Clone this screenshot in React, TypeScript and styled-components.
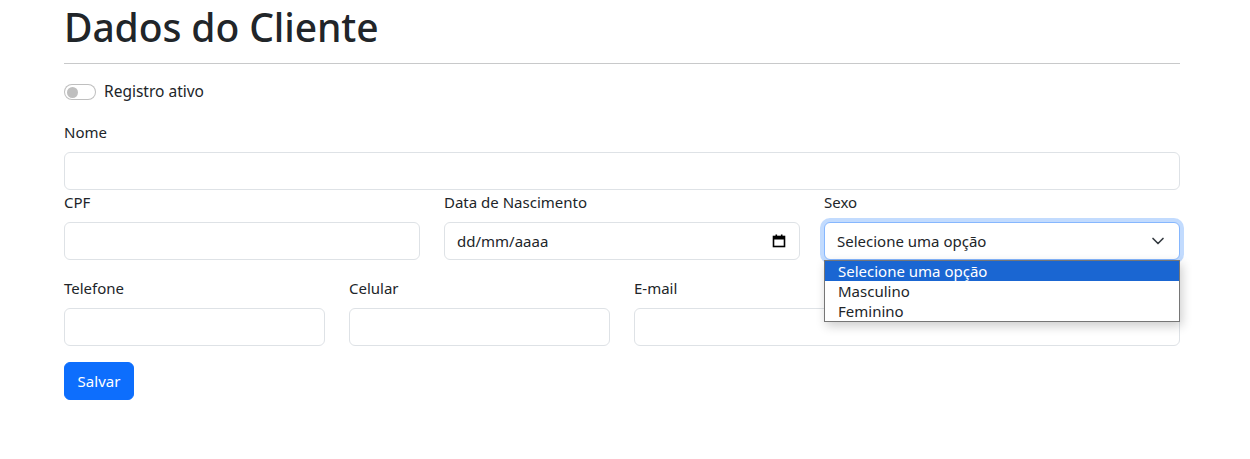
import React from "react";
import styled, { createGlobalStyle } from "styled-components";

const GlobalStyle = createGlobalStyle`
  * { box-sizing: border-box; }
  html, body { margin: 0; padding: 0; background: #fff; }
  body {
    font-family: "Noto Sans", "Open Sans", sans-serif;
    font-size: 16px;
    line-height: 1.5;
    color: #212529;
  }
`;

const Container = styled.div`
  width: 1116px;
  margin-left: 64px;
`;

const Title = styled.h1`
  margin: 0;
  font-size: 39px;
  font-weight: 500;
  line-height: 53px;
  height: 53px;
  letter-spacing: -0.1px;
`;

const Divider = styled.hr`
  margin: 10px 0 16px 0;
  border: 0;
  border-top: 1px solid #c8c9ca;
  height: 0;
`;

const SwitchRow = styled.div`
  display: flex;
  align-items: center;
  gap: 8px;
  height: 24px;
`;

const SwitchLabel = styled.span`
  font-size: 15.5px;
`;

const SwitchTrack = styled.span`
  width: 32px;
  height: 16px;
  border: 1px solid rgba(0, 0, 0, 0.25);
  border-radius: 8px;
  background: #fff;
  display: inline-flex;
  align-items: center;
  padding-left: 2px;
`;

const SwitchKnob = styled.span`
  width: 11px;
  height: 11px;
  border-radius: 50%;
  background: #bfbfbf;
`;

const Field = styled.div<{ $span: number }>`
  grid-column: span ${(p) => p.$span};
  display: flex;
  flex-direction: column;
`;

const Grid = styled.div<{ $top?: number }>`
  display: grid;
  grid-template-columns: repeat(12, 1fr);
  column-gap: 24px;
  margin-top: ${(p) => p.$top ?? 0}px;
`;

const Label = styled.label`
  display: block;
  height: 24px;
  line-height: 24px;
  margin-bottom: 8px;
  font-size: 15px;
`;

const Input = styled.input`
  display: block;
  width: 100%;
  height: 38px;
  padding: 6px 12px;
  font: inherit;
  color: #212529;
  background: #fff;
  border: 1px solid #dee2e6;
  border-radius: 6px;
  outline: none;
`;

const DateBox = styled.div`
  display: flex;
  align-items: center;
  justify-content: space-between;
  height: 38px;
  padding: 0 13px 0 12px;
  border: 1px solid #dee2e6;
  border-radius: 6px;
  background: #fff;
  font-size: 15px;
`;

const SelectWrap = styled.div`
  position: relative;
`;

const SelectBox = styled.div`
  display: flex;
  align-items: center;
  justify-content: space-between;
  height: 38px;
  padding: 0 14px 0 12px;
  border: 1px solid #86b7fe;
  border-radius: 6px;
  background: #fff;
  box-shadow: 0 0 0 4px rgba(13, 110, 253, 0.25);
  font-size: 15px;
`;

const Listbox = styled.ul`
  position: absolute;
  left: 0;
  right: 0;
  top: 38px;
  margin: 0;
  padding: 0;
  list-style: none;
  background: #fff;
  border: 1px solid #767676;
  box-shadow: 2px 4px 10px rgba(0, 0, 0, 0.2);
  z-index: 5;
`;

const Option = styled.li<{ $active?: boolean }>`
  height: 20px;
  line-height: 20px;
  padding-left: 13px;
  font-size: 15px;
  background: ${(p) => (p.$active ? "#1a66d2" : "transparent")};
  color: ${(p) => (p.$active ? "#fff" : "#212529")};
`;

const Button = styled.button`
  margin-top: 16px;
  height: 38px;
  padding: 0 12px;
  font: inherit;
  font-size: 15px;
  color: #fff;
  background: #0d6efd;
  border: 1px solid #0d6efd;
  border-radius: 6px;
  width: 70px;
`;

const Spacer = styled.div`
  height: 16px;
`;

const CalendarIcon = () => (
  <svg width="14" height="14" viewBox="0 0 14 14" fill="none">
    <rect x="1.5" y="2.5" width="11" height="10" stroke="#000" strokeWidth="1.6" />
    <rect x="1.5" y="2.5" width="11" height="3" fill="#000" />
    <rect x="3.5" y="0.5" width="1.6" height="2.5" fill="#000" />
    <rect x="8.9" y="0.5" width="1.6" height="2.5" fill="#000" />
  </svg>
);

const Chevron = () => (
  <svg width="14" height="10" viewBox="0 0 16 12" fill="none">
    <path d="m2 3 6 6 6-6" stroke="#343a40" strokeWidth="2" strokeLinecap="round" strokeLinejoin="round" />
  </svg>
);

export default function App() {
  return (
    <>
      <GlobalStyle />
      <Container>
        <Title>Dados do Cliente</Title>
        <Divider />
        <SwitchRow>
          <SwitchTrack>
            <SwitchKnob />
          </SwitchTrack>
          <SwitchLabel>Registro ativo</SwitchLabel>
        </SwitchRow>
        <Spacer />
        <Label>Nome</Label>
        <Input type="text" />
        <Grid>
          <Field $span={4}>
            <Label>CPF</Label>
            <Input type="text" />
          </Field>
          <Field $span={4}>
            <Label>Data de Nascimento</Label>
            <DateBox>
              <span>dd/mm/aaaa</span>
              <CalendarIcon />
            </DateBox>
          </Field>
          <Field $span={4}>
            <Label>Sexo</Label>
            <SelectWrap>
              <SelectBox>
                <span>Selecione uma opção</span>
                <Chevron />
              </SelectBox>
              <Listbox>
                <Option $active>Selecione uma opção</Option>
                <Option>Masculino</Option>
                <Option>Feminino</Option>
              </Listbox>
            </SelectWrap>
          </Field>
        </Grid>
        <Grid $top={16}>
          <Field $span={3}>
            <Label>Telefone</Label>
            <Input type="text" />
          </Field>
          <Field $span={3}>
            <Label>Celular</Label>
            <Input type="text" />
          </Field>
          <Field $span={6}>
            <Label>E-mail</Label>
            <Input type="text" />
          </Field>
        </Grid>
        <Button>Salvar</Button>
      </Container>
    </>
  );
}
